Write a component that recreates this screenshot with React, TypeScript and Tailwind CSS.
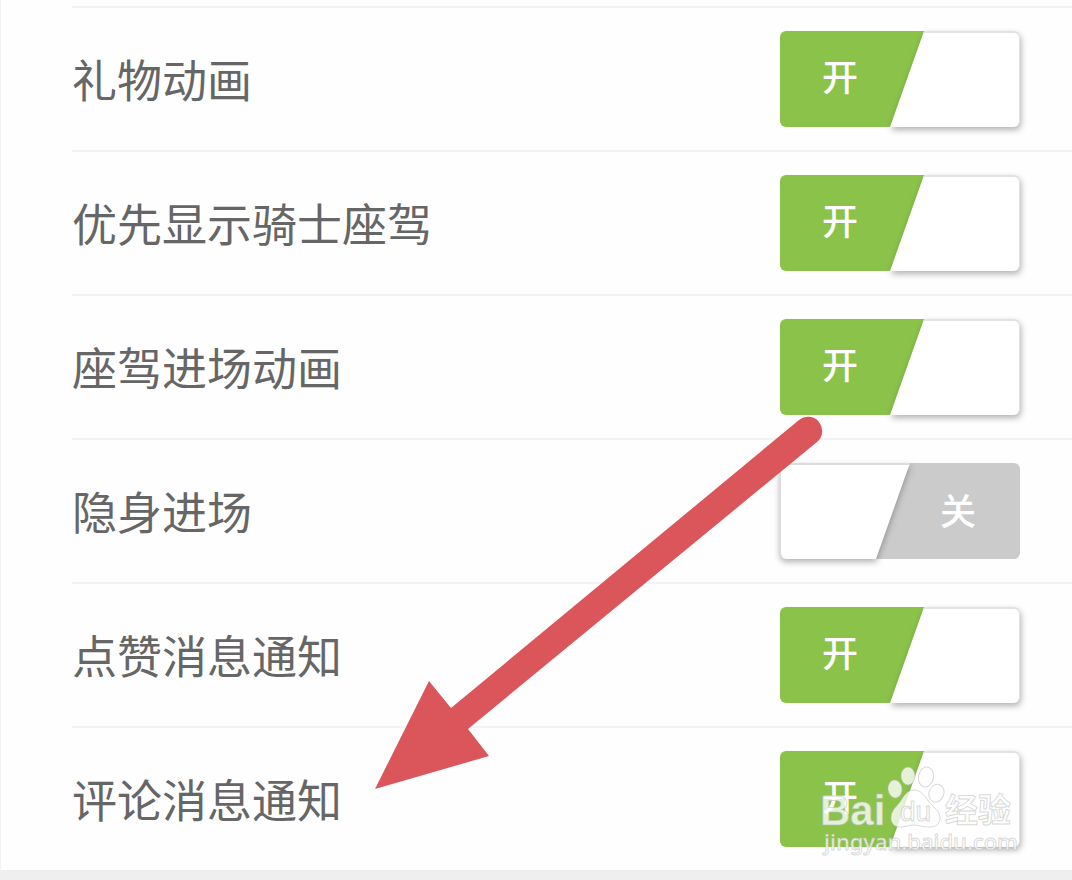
import React, { useState } from 'react';

interface Setting {
  id: string;
  label: string;
  enabled: boolean;
}

const initialSettings: Setting[] = [
  { id: 'gift', label: '礼物动画', enabled: true },
  { id: 'knight', label: '优先显示骑士座驾', enabled: true },
  { id: 'ride', label: '座驾进场动画', enabled: true },
  { id: 'stealth', label: '隐身进场', enabled: false },
  { id: 'like', label: '点赞消息通知', enabled: true },
  { id: 'comment', label: '评论消息通知', enabled: true },
];

// white thumb slides over the coloured half that holds the text
const SwitchFace: React.FC<{ on: boolean }> = ({ on }) => {
  if (on) {
    return (
      <span className="flex h-24 w-60 rounded-md">
        <span className="flex w-36 items-center justify-center rounded-l-md bg-[#8bc34a] pr-6 pb-2 text-4xl font-medium text-white">
          开
        </span>
        <span className="z-10 -ml-[34px] flex drop-shadow-[1px_3px_3px_rgba(0,0,0,0.3)]">
          <span className="w-[130px] rounded-r-md border-t-2 border-r border-[#e2e2e2] bg-white [clip-path:polygon(34px_0,100%_0,100%_100%,0_100%)]" />
        </span>
      </span>
    );
  }
  return (
    <span className="flex h-24 w-60 rounded-md">
      <span className="z-10 flex drop-shadow-[0_3px_3px_rgba(0,0,0,0.3)]">
        <span className="w-[130px] rounded-l-md border-t-2 border-l border-[#dcdcdc] bg-white [clip-path:polygon(0_0,100%_0,96px_100%,0_100%)]" />
      </span>
      <span className="-ml-[34px] flex w-36 items-center justify-center rounded-r-md bg-[#cbcbcb] pb-1 pl-5 text-4xl font-medium text-white">
        关
      </span>
    </span>
  );
};

const Arrow: React.FC = () => (
  <svg
    className="pointer-events-none absolute top-[410px] left-[370px] z-20"
    width="460"
    height="390"
    viewBox="370 410 460 390"
    aria-hidden="true"
  >
    <path
      d="M375 789 L429 681 L451 708 L799 420 A14 14 0 0 1 817 442 L468 729 L489 756 Z"
      fill="#db565b"
    />
  </svg>
);

const Watermark: React.FC = () => (
  <svg
    className="pointer-events-none absolute right-[52px] bottom-5 z-20"
    width="204"
    height="96"
    viewBox="816 764 204 96"
    role="img"
    aria-label="Baidu 经验"
  >
    <g fill="#ffffff" fillOpacity="0.78" stroke="#b8b8b8" strokeOpacity="0.55" strokeWidth="1">
      <ellipse cx="895" cy="789" rx="7" ry="9" transform="rotate(-8 895 789)" />
      <ellipse cx="908" cy="776" rx="7" ry="9" />
      <ellipse cx="926" cy="777" rx="7.5" ry="10" transform="rotate(12 926 777)" />
      <ellipse cx="936.5" cy="793" rx="7.5" ry="9" transform="rotate(20 936 793)" />
      <path d="M914 790 C921 790 925 796 929 802 C933 807 940 811 940 818 C940 825 935 827 929 827 C922 827 919 825 914 825 C909 825 906 827 900 827 C894 827 891 823 891 818 C891 811 896 807 900 802 C904 796 907 790 914 790 Z" />
      <text x="820" y="825" className="font-['Liberation_Sans'] text-[42px] font-bold">Bai</text>
      <text x="900" y="821" className="font-['Liberation_Sans'] text-[28px]">du</text>
      <text x="945" y="822" className="font-['Noto_Sans_CJK_SC'] text-[33px] font-bold">经验</text>
      <text x="824" y="850" className="font-['Noto_Sans'] text-[22px] font-medium">jingyan.baidu.com</text>
    </g>
  </svg>
);

const App: React.FC = () => {
  const [settings, setSettings] = useState<Setting[]>(initialSettings);

  const toggle = (id: string) => {
    setSettings(settings.map((s) => (s.id === id ? { ...s, enabled: !s.enabled } : s)));
  };

  return (
    <div className="relative min-h-screen bg-[#efefef] font-['Noto_Sans_CJK_SC',sans-serif]">
      <main className="border-l border-[#f3f3f3] bg-[#fefefe] pt-1.5">
        <ul className="pl-[71px]">
          {settings.map((s) => (
            <li key={s.id} className="h-36 border-t-2 border-[#f3f3f3]">
              <label
                htmlFor={s.id}
                className="relative flex h-full cursor-pointer items-center justify-between pr-[52px]"
              >
                <span className="pb-0.5 text-[45px] leading-none text-[#666666]">{s.label}</span>
                <input
                  id={s.id}
                  type="checkbox"
                  role="switch"
                  checked={s.enabled}
                  onChange={() => toggle(s.id)}
                  className="sr-only"
                />
                <SwitchFace on={s.enabled} />
              </label>
            </li>
          ))}
        </ul>
      </main>
      <Arrow />
      <Watermark />
    </div>
  );
};

export default App;
